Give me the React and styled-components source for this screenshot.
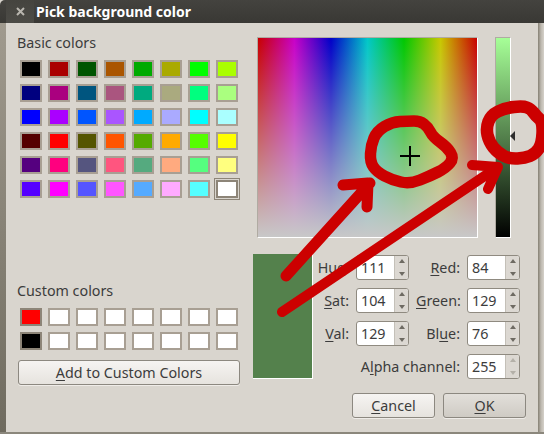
import React from 'react';
import styled, {createGlobalStyle} from 'styled-components';

const GlobalStyle = createGlobalStyle`
    html, body {
        margin: 0;
        padding: 0;
        background: #d9d5ce;
    }
    body {
        font-family: "Noto Sans", "Open Sans", sans-serif;
        font-size: 14.3px;
        color: #3c3c3c;
    }
`;

const basicColors = [
    '#000000', '#aa0000', '#005500', '#aa5500', '#00aa00', '#aaaa00', '#00ff00', '#aaff00',
    '#00007f', '#aa007f', '#00557f', '#aa557f', '#00aa7f', '#aaaa7f', '#00ff7f', '#aaff7f',
    '#0000ff', '#aa00ff', '#0055ff', '#aa55ff', '#00aaff', '#aaaaff', '#00ffff', '#aaffff',
    '#550000', '#ff0000', '#555500', '#ff5500', '#55aa00', '#ffaa00', '#55ff00', '#ffff00',
    '#55007f', '#ff007f', '#55557f', '#ff557f', '#55aa7f', '#ffaa7f', '#55ff7f', '#ffff7f',
    '#5500ff', '#ff00ff', '#5555ff', '#ff55ff', '#55aaff', '#ffaaff', '#55ffff', '#ffffff',
];

const customColors = [
    '#ff0000', '#ffffff', '#ffffff', '#ffffff', '#ffffff', '#ffffff', '#ffffff', '#ffffff',
    '#000000', '#ffffff', '#ffffff', '#ffffff', '#ffffff', '#ffffff', '#ffffff', '#ffffff',
];

// hand drawn loops from the screenshot, rounded off through the midpoints
const loopPath = (points) => {
    const mid = (a, b) => [(a[0] + b[0]) / 2, (a[1] + b[1]) / 2];
    const start = mid(points[points.length - 1], points[0]);
    let d = `M${start[0]} ${start[1]}`;
    points.forEach((point, i) => {
        const end = mid(point, points[(i + 1) % points.length]);
        d += `Q${point[0]} ${point[1]} ${end[0]} ${end[1]}`;
    });
    return d + 'Z';
};

const pickerLoop = [
    [408, 121], [420, 121], [428, 127], [433, 137], [447, 147], [454, 158], [446, 168],
    [430, 176], [410, 184], [392, 180], [377, 172], [370, 162], [371, 145], [377, 131], [392, 122],
];

const valueLoop = [
    [523, 106], [531, 109], [536, 116], [543, 122], [542, 144], [535, 154], [525, 158],
    [510, 159], [498, 153], [489, 142], [486, 128], [491, 115], [505, 108],
];

const Screen = styled.div`
    position: relative;
    width: 544px;
    height: 434px;
    overflow: hidden;
    display: flex;
    flex-direction: column;
    background: #d9d5ce;
`;

const TitleBar = styled.div`
    height: 23px;
    flex: none;
    display: flex;
    align-items: center;
    background: linear-gradient(#44433f, #393834);
    border-top-left-radius: 5px;
`;

const CloseButton = styled.div`
    width: 28px;
    height: 23px;
    margin-left: 6px;
    flex: none;
    display: flex;
    align-items: center;
    justify-content: center;
    background: linear-gradient(#45443f, #4c4b46);
`;

const Title = styled.div`
    margin-left: 2px;
    font-size: 14px;
    font-weight: 700;
    color: #ffffff;
    white-space: nowrap;
`;

const Frame = styled.div`
    flex: 1;
    display: flex;
    min-height: 0;
    border-bottom: 2px solid #8b877c;
`;

const LeftEdge = styled.div`
    width: 6px;
    flex: none;
    background: linear-gradient(#a09a8e, #6f6b5f);
`;

const RightEdge = styled.div`
    width: 6px;
    flex: none;
    background: linear-gradient(90deg, #858073, #bdb8af 50%, #d5d1ca);
`;

const Body = styled.div`
    flex: 1;
    display: flex;
    background: #d9d5ce;
`;

const LeftColumn = styled.div`
    width: 240px;
    flex: none;
    padding: 11px 0 0 12px;
    box-sizing: border-box;
`;

const GroupLabel = styled.div`
    height: 18px;
    line-height: 18px;
    margin: ${props => props.$top || 0}px 0 8px -1px;
`;

const SwatchGrid = styled.div`
    display: grid;
    grid-template-columns: repeat(8, 22px);
    grid-auto-rows: 18px;
    gap: 6px;
    margin-left: 2px;
`;

const Swatch = styled.div`
    box-sizing: border-box;
    border: 2px solid ${props => props.$dark || props.$selected ? '#8d8578' : '#a89f93'};
    background: ${props => props.$color};
    box-shadow: ${props => props.$selected ? '0 0 0 1px #d9d5ce, 0 0 0 2px #8d8578' : 'none'};
`;

const Button = styled.button`
    box-sizing: border-box;
    height: 25px;
    width: ${props => props.$width}px;
    padding: 0;
    border: 1px solid #8c8880;
    border-radius: 3px;
    font: inherit;
    color: #3c3c3c;
    background: ${props => props.$pressed
        ? 'linear-gradient(#e2dfda, #cfcbc4)'
        : 'linear-gradient(#f6f4f2, #e6e3de)'};
    box-shadow: 0 1px 0 #efece8;
`;

const AddButton = styled(Button)`
    display: block;
    margin-top: 10px;
`;

const Key = styled.span`
    text-decoration: underline;
    text-underline-offset: 2px;
`;

const RightColumn = styled.div`
    flex: 1;
    padding-top: 14px;
    display: flex;
    flex-direction: column;
`;

const PickerRow = styled.div`
    display: flex;
    gap: 17px;
    margin-left: 11px;
`;

const Spectrum = styled.div`
    box-sizing: border-box;
    width: 221px;
    height: 201px;
    border: 1px solid;
    border-color: #b0aba2 #ffffff #ffffff #b0aba2;
    background:
        linear-gradient(rgba(200, 200, 200, 0), rgb(200, 200, 200)),
        linear-gradient(90deg, #c80000, #c800c8 16.67%, #0000c8 33.33%, #00c8c8 50%, #00c800 66.67%, #c8c800 83.33%, #c80000);
`;

const ValueBar = styled.div`
    position: relative;
    box-sizing: border-box;
    width: 16px;
    height: 201px;
    border: 1px solid;
    border-color: #b0aba2 #ffffff #ffffff #b0aba2;
    background: linear-gradient(rgb(166, 255, 151), #000000);
`;

const Marker = styled.div`
    position: absolute;
    left: 14px;
    top: 93px;
    width: 0;
    height: 0;
    border-style: solid;
    border-width: 5px 5px 5px 0;
    border-color: transparent #2e2e2e transparent transparent;
`;

const EditRow = styled.div`
    display: flex;
    margin: 16px 0 0 7px;
`;

const Preview = styled.div`
    box-sizing: border-box;
    width: 60px;
    height: 125px;
    flex: none;
    background: #54814c;
    border-right: 1px solid #ffffff;
    border-bottom: 1px solid #ffffff;
`;

const FieldGrid = styled.div`
    display: grid;
    grid-template-columns: 36px 53px 44px 53px;
    grid-auto-rows: 25px;
    column-gap: 7px;
    row-gap: 8px;
    margin-top: 1px;
`;

const FieldLabel = styled.label`
    line-height: 25px;
    text-align: right;
    white-space: nowrap;
    grid-column: ${props => props.$span || 'auto'};
`;

const Spin = styled.div`
    display: flex;
    box-sizing: border-box;
    height: 25px;
    border: 1px solid #8f8a80;
    border-radius: 3px;
    overflow: hidden;
    background: #ffffff;
`;

const SpinValue = styled.div`
    flex: 1;
    padding-left: 4px;
    line-height: 23px;
    color: #3c3c3c;
`;

const SpinArrows = styled.div`
    width: 14px;
    flex: none;
    display: flex;
    flex-direction: column;
    align-items: center;
    justify-content: space-between;
    padding: 3px 0;
    box-sizing: border-box;
    background: #dcd8d2;
    border-left: 1px solid #c4c0b8;
`;

const Arrow = styled.div`
    width: 0;
    height: 0;
    border-left: 3px solid transparent;
    border-right: 3px solid transparent;
    border-${props => props.$up ? 'bottom' : 'top'}: 4px solid ${props => props.$disabled ? '#b4b0a8' : '#6e6a62'};
`;

const ButtonRow = styled.div`
    display: flex;
    gap: 8px;
    margin: 14px 0 0 106px;
`;

const Annotations = styled.svg`
    position: absolute;
    left: 0;
    top: 0;
    pointer-events: none;
`;

const SpinBox = ({value, disabled}) => (
    <Spin>
        <SpinValue>{value}</SpinValue>
        <SpinArrows>
            <Arrow $up $disabled={disabled} />
            <Arrow $disabled={disabled} />
        </SpinArrows>
    </Spin>
);

const App = () => (
    <Screen>
        <GlobalStyle />
        <TitleBar>
            <CloseButton>
                <svg width="9" height="9" viewBox="0 0 9 9">
                    <path d="M1 1L8 8M8 1L1 8" stroke="#b9b6af" strokeWidth="2" />
                </svg>
            </CloseButton>
            <Title>Pick background color</Title>
        </TitleBar>
        <Frame>
            <LeftEdge />
            <Body>
                <LeftColumn>
                    <GroupLabel>Basic colors</GroupLabel>
                    <SwatchGrid>
                        {basicColors.map((color, i) => (
                            <Swatch key={i} $color={color} $selected={i === 47} />
                        ))}
                    </SwatchGrid>
                    <GroupLabel $top={84}>Custom colors</GroupLabel>
                    <SwatchGrid>
                        {customColors.map((color, i) => (
                            <Swatch key={i} $color={color} $dark={color !== '#ffffff'} />
                        ))}
                    </SwatchGrid>
                    <AddButton $width={222}><Key>A</Key>dd to Custom Colors</AddButton>
                </LeftColumn>
                <RightColumn>
                    <PickerRow>
                        <Spectrum />
                        <ValueBar>
                            <Marker />
                        </ValueBar>
                    </PickerRow>
                    <EditRow>
                        <Preview />
                        <FieldGrid>
                            <FieldLabel>Hu<Key>e</Key>:</FieldLabel>
                            <SpinBox value="111" />
                            <FieldLabel><Key>R</Key>ed:</FieldLabel>
                            <SpinBox value="84" />
                            <FieldLabel><Key>S</Key>at:</FieldLabel>
                            <SpinBox value="104" />
                            <FieldLabel><Key>G</Key>reen:</FieldLabel>
                            <SpinBox value="129" />
                            <FieldLabel><Key>V</Key>al:</FieldLabel>
                            <SpinBox value="129" />
                            <FieldLabel>Bl<Key>u</Key>e:</FieldLabel>
                            <SpinBox value="76" />
                            <FieldLabel $span="1 / span 3">A<Key>l</Key>pha channel:</FieldLabel>
                            <SpinBox value="255" disabled />
                        </FieldGrid>
                    </EditRow>
                    <ButtonRow>
                        <Button $width={83}><Key>C</Key>ancel</Button>
                        <Button $width={83} $pressed><Key>O</Key>K</Button>
                    </ButtonRow>
                </RightColumn>
            </Body>
            <RightEdge />
        </Frame>
        <Annotations width="544" height="434" viewBox="0 0 544 434" fill="none" stroke="#cc0000" strokeWidth="11" strokeLinecap="round" strokeLinejoin="round">
            <path d={loopPath(pickerLoop)} strokeWidth="11.5" />
            <path d={loopPath(valueLoop)} strokeWidth="12.5" />
            <path d="M286 276L370 183M343 185L368 183L367 207" />
            <path d="M282 312L498 167M472 165L498 167L488 189" strokeWidth="10" />
            <path d="M400 156H420M410 146V166" stroke="#000000" strokeWidth="2" strokeLinecap="butt" />
        </Annotations>
    </Screen>
);

export default App;
